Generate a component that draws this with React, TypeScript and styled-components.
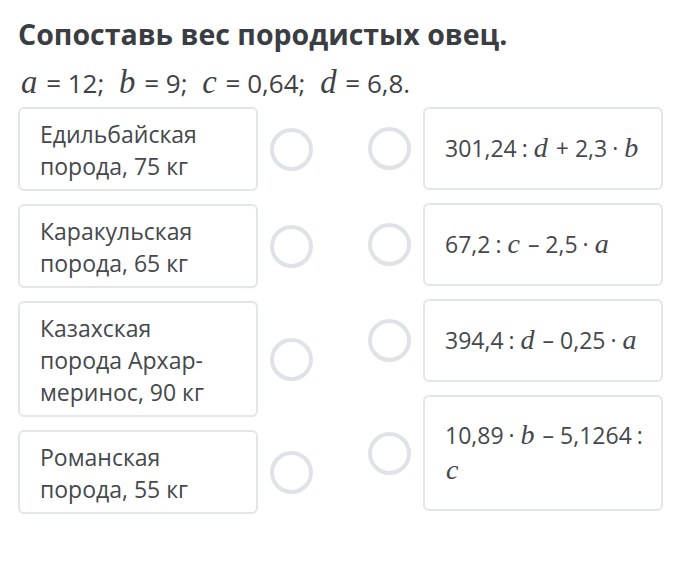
import React from 'react'
import styled, { createGlobalStyle } from 'styled-components'

const GlobalStyle = createGlobalStyle`
  html, body {
    margin: 0;
    padding: 0;
    background: #ffffff;
  }
  body {
    font-family: 'Open Sans', 'Noto Sans', sans-serif;
    color: #3f4246;
  }
`

const Page = styled.div`
  width: 677px;
  padding: 13px 0 0 18px;
  box-sizing: border-box;
`

const Title = styled.h1`
  margin: 0;
  font-size: 28.5px;
  line-height: 42px;
  font-weight: 700;
  color: #3a3d42;
`

const Givens = styled.p`
  margin: 8px 0 0 2px;
  font-size: 26px;
  line-height: 40px;
  font-weight: 400;
  color: #3f4246;
`

const Sep = styled.span`
  margin-right: 7px;
`

const Board = styled.div`
  display: grid;
  grid-template-columns: 295px 295px;
  column-gap: 55px;
  align-items: start;
  margin-top: 4px;
`

const Column = styled.div`
  display: flex;
  flex-direction: column;
  gap: 13px;
`

const Row = styled.div`
  display: flex;
  align-items: center;
  gap: 12px;
`

const Card = styled.div<{ math?: boolean }>`
  width: 240px;
  box-sizing: border-box;
  border: 2px solid #e3e6e9;
  border-radius: 6px;
  background: #ffffff;
  font-size: 23px;
  color: #45484c;
  padding: ${(props) => (props.math ? '21px 18px 21px 20px' : '9px 24px 7px 20px')};
  line-height: ${(props) => (props.math ? '35px' : '32px')};
  min-height: 83px;
  display: flex;
  align-items: center;
`

const Radio = styled.div`
  width: 43px;
  height: 43px;
  box-sizing: border-box;
  border: 4px solid #dfe3e8;
  border-radius: 50%;
  flex-shrink: 0;
`

const V = styled.i<{ big?: boolean }>`
  font-family: 'Liberation Serif', 'DejaVu Serif', serif;
  font-style: italic;
  font-size: ${(props) => (props.big ? '1.26em' : '1.22em')};
  line-height: 1;
  padding: 0 2px 0 1px;
`

const Op = styled.span`
  padding: 0 5px;
`

const NoWrap = styled.span`
  white-space: nowrap;
`

const breeds = [
  'Едильбайская порода, 75 кг',
  'Каракульская порода, 65 кг',
  'Казахская порода Архар-меринос, 90 кг',
  'Романская порода, 55 кг',
]

const formulas = [
  <>
    301,24<Op>:</Op><V>d</V> + 2,3<Op>·</Op><V>b</V>
  </>,
  <>
    67,2<Op>:</Op><V>c</V> – 2,5<Op>·</Op><V>a</V>
  </>,
  <>
    394,4<Op>:</Op><V>d</V> – 0,25<Op>·</Op><V>a</V>
  </>,
  <>
    <NoWrap>
      10,89<Op>·</Op><V>b</V> – 5,1264<Op>:</Op>
    </NoWrap>{' '}
    <V>c</V>
  </>,
]

const App: React.FC = () => {
  return (
    <>
      <GlobalStyle />
      <Page>
        <Title>Сопоставь вес породистых овец.</Title>
        <Givens>
          <V big>a</V> = 12;<Sep /> <V big>b</V> = 9;<Sep /> <V big>c</V> = 0,64;<Sep />{' '}
          <V big>d</V> = 6,8.
        </Givens>
        <Board>
          <Column>
            {breeds.map((text) => (
              <Row key={text}>
                <Card>
                  <span>{text}</span>
                </Card>
                <Radio />
              </Row>
            ))}
          </Column>
          <Column>
            {formulas.map((f, i) => (
              <Row key={i}>
                <Radio />
                <Card math>
                  <span>{f}</span>
                </Card>
              </Row>
            ))}
          </Column>
        </Board>
      </Page>
    </>
  )
}

export default App
